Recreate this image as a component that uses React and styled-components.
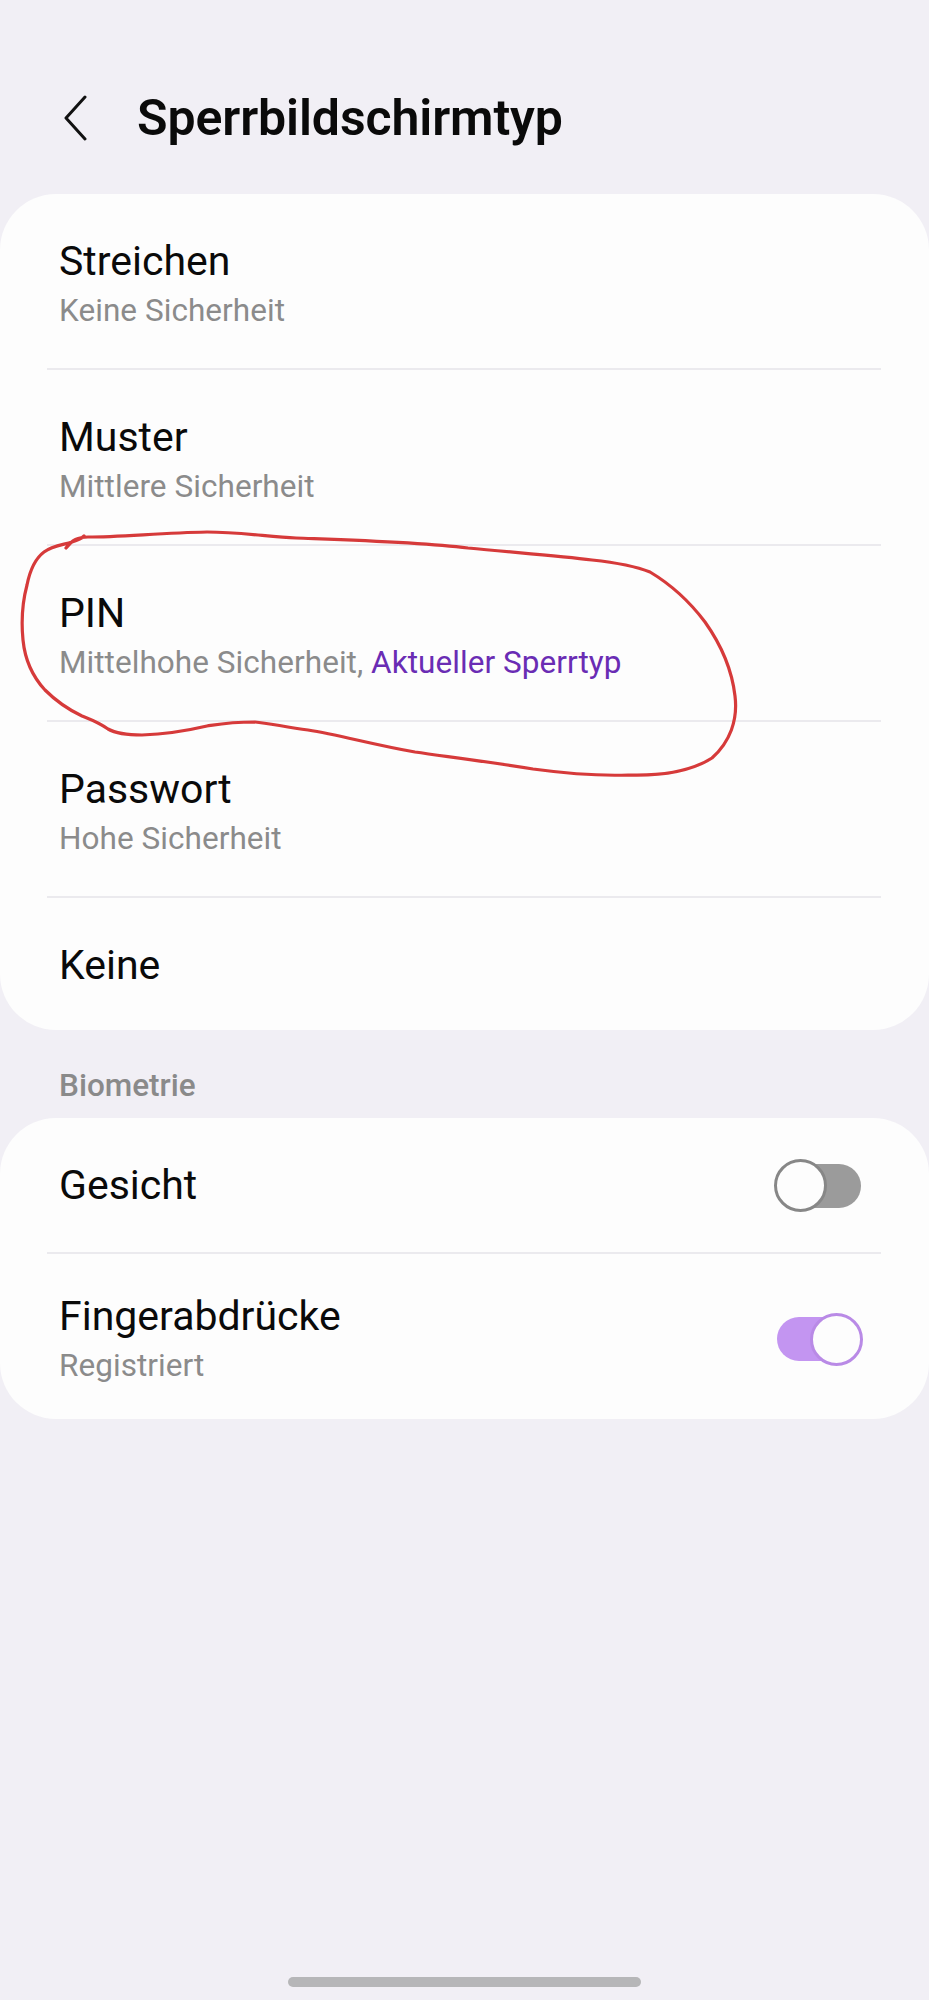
import React from "react";
import styled, { createGlobalStyle } from "styled-components";

const GlobalStyle = createGlobalStyle`
  html, body {
    margin: 0;
    padding: 0;
    background: #f1eff5;
  }
  body {
    font-family: Roboto, "Noto Sans", "Liberation Sans", sans-serif;
    color: #0d0d0d;
  }
`;

const Page = styled.div`
  position: relative;
  width: 929px;
  min-height: 2000px;
  display: flex;
  flex-direction: column;
  background: #f1eff5;
`;

const Header = styled.header`
  display: flex;
  align-items: center;
  gap: 50px;
  padding: 88px 0 0 63px;
  height: 60px;
  margin-bottom: 46px;
`;

const BackButton = styled.button`
  display: flex;
  align-items: center;
  padding: 0;
  border: none;
  background: none;
  width: 24px;
  height: 46px;
`;

const Title = styled.h1`
  margin: 0;
  font-size: 50px;
  line-height: 60px;
  font-weight: 600;
  color: #0a0a0a;
  letter-spacing: -0.1px;
`;

const Card = styled.section`
  background: #fdfdfd;
  border-radius: 56px;
  display: flex;
  flex-direction: column;
`;

const Row = styled.div`
  display: flex;
  align-items: center;
  justify-content: space-between;
  padding: ${(p) => p.$pt ?? 41}px 66px ${(p) => p.$pb ?? 39}px 59px;
  min-height: ${(p) => (p.$single ? "52px" : "auto")};
`;

const Divider = styled.div`
  height: 2px;
  margin: 0 48px 0 47px;
  background: #ebeaee;
`;

const TextCol = styled.div`
  display: flex;
  flex-direction: column;
  gap: 5px;
`;

const ItemTitle = styled.div`
  font-size: 41px;
  line-height: 49px;
  color: #0a0a0a;
`;

const ItemSub = styled.div`
  font-size: 31.5px;
  line-height: 40px;
  letter-spacing: 0.05px;
  color: #8b8b8b;
`;

const Accent = styled.span`
  color: #6a2cb4;
`;

const SectionLabel = styled.div`
  font-size: 31.5px;
  line-height: 36px;
  font-weight: 500;
  color: #8a8a8a;
  padding: 38px 0 14px 59px;
`;

const Switch = styled.div`
  position: relative;
  width: 89px;
  height: 53px;
  flex-shrink: 0;
  display: flex;
  align-items: center;
`;

const Track = styled.div`
  width: 84px;
  height: 44px;
  margin-left: 3px;
  border-radius: 22px;
  background: ${(p) => (p.$on ? "#c395f1" : "#9b9b9b")};
`;

const Knob = styled.div`
  position: absolute;
  top: 0;
  ${(p) => (p.$on ? "right: 0;" : "left: 0;")}
  width: 53px;
  height: 53px;
  box-sizing: border-box;
  border-radius: 50%;
  background: #fdfdfd;
  border: 3px solid ${(p) => (p.$on ? "#b98ae6" : "#878787")};
`;

const HomeBar = styled.div`
  position: absolute;
  left: 288px;
  top: 1977px;
  width: 353px;
  height: 10px;
  border-radius: 5px;
  background: #b6b6b8;
`;

const Scribble = styled.svg`
  position: absolute;
  left: 0;
  top: 0;
  pointer-events: none;
`;

function Toggle({ on }) {
  return (
    <Switch>
      <Track $on={on} />
      <Knob $on={on} />
    </Switch>
  );
}

const lockTypes = [
  { title: "Streichen", sub: "Keine Sicherheit" },
  { title: "Muster", sub: "Mittlere Sicherheit" },
  { title: "PIN", sub: "Mittelhohe Sicherheit, ", accent: "Aktueller Sperrtyp" },
  { title: "Passwort", sub: "Hohe Sicherheit" },
  { title: "Keine" },
];

export default function App() {
  return (
    <Page>
      <GlobalStyle />
      <Header>
        <BackButton aria-label="Zurück">
          <svg width="24" height="46" viewBox="0 0 24 46">
            <polyline
              points="22,2 3,23 22,44"
              fill="none"
              stroke="#111"
              strokeWidth="3"
              strokeLinecap="round"
              strokeLinejoin="round"
            />
          </svg>
        </BackButton>
        <Title>Sperrbildschirmtyp</Title>
      </Header>

      <Card>
        {lockTypes.map((item, i) => (
          <React.Fragment key={item.title}>
            {i > 0 && <Divider />}
            <Row
              $single={!item.sub}
              $pt={item.sub ? 43 : 41}
              $pb={item.sub ? 37 : 39}
            >
              <TextCol>
                <ItemTitle>{item.title}</ItemTitle>
                {item.sub && (
                  <ItemSub>
                    {item.sub}
                    {item.accent && <Accent>{item.accent}</Accent>}
                  </ItemSub>
                )}
              </TextCol>
            </Row>
          </React.Fragment>
        ))}
      </Card>

      <SectionLabel>Biometrie</SectionLabel>

      <Card>
        <Row $pt={41} $pb={40}>
          <TextCol>
            <ItemTitle>Gesicht</ItemTitle>
          </TextCol>
          <Toggle on={false} />
        </Row>
        <Divider />
        <Row $pt={38} $pb={33}>
          <TextCol>
            <ItemTitle>Fingerabdrücke</ItemTitle>
            <ItemSub>Registriert</ItemSub>
          </TextCol>
          <Toggle on />
        </Row>
      </Card>

      <Scribble width="929" height="2000" viewBox="0 0 929 2000">
        <path
          d="M 66 548 C 72 540 78 537 88 537 C 120 537 160 533 207 532
             C 240 532 270 537 296 538 C 350 540 420 542 468 548
             C 520 553 560 556 592 560 C 620 563 640 568 650 572
             C 670 584 690 602 705 622 C 722 646 732 670 735 696
             C 738 720 730 742 712 758 C 690 772 660 776 628 775
             C 600 776 570 774 533 769 C 490 762 450 757 415 752
             C 370 744 340 735 308 730 C 285 727 268 723 255 722
             C 230 722 220 724 207 726 C 190 730 170 734 142 735
             C 125 735 115 733 108 729 C 98 722 92 720 82 716
             C 65 708 55 700 45 690 C 32 676 25 660 23 640
             C 21 620 23 600 27 585 C 30 570 36 558 44 552
             C 52 546 62 545 72 542 C 78 540 82 538 84 536"
          fill="none"
          stroke="#d63a3a"
          strokeWidth="3.2"
          strokeLinecap="round"
          strokeLinejoin="round"
        />
      </Scribble>

      <HomeBar />
    </Page>
  );
}
